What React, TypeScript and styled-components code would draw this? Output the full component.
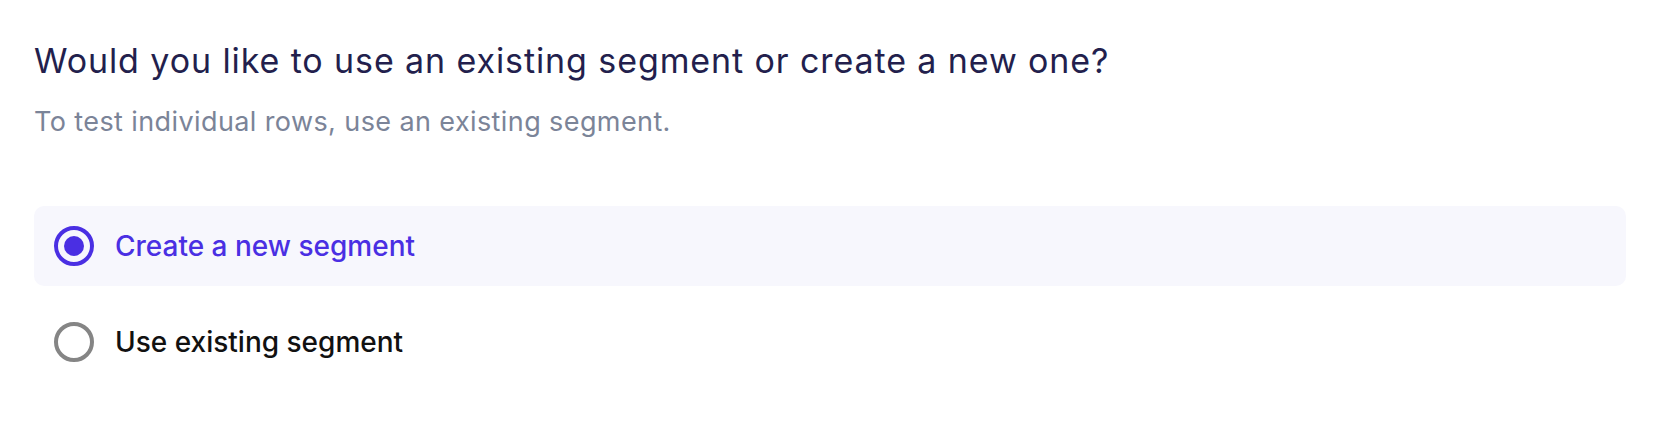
import React, { useState } from "react";
import styled, { createGlobalStyle } from "styled-components";

const GlobalStyle = createGlobalStyle`
    html, body {
        margin: 0;
        padding: 0;
        background: #ffffff;
        font-family: Inter, "Noto Sans", sans-serif;
    }
`;

const Container = styled.div`
    padding: 40px 34px 0 34px;
    display: flex;
    flex-direction: column;
`;

const Title = styled.h2`
    margin: 0;
    font-size: 34px;
    line-height: 42px;
    font-weight: 400;
    letter-spacing: 0.9px;
    color: #231f4d;
`;

const Subtitle = styled.p`
    margin: 22px 0 0 0;
    font-size: 27px;
    line-height: 36px;
    font-weight: 400;
    letter-spacing: 0.4px;
    color: #7b8498;
`;

const OptionList = styled.div`
    margin-top: 66px;
    display: flex;
    flex-direction: column;
    gap: 16px;
`;

const OptionRow = styled.label<{ $selected: boolean }>`
    display: flex;
    flex-direction: row;
    align-items: center;
    gap: 21px;
    height: 80px;
    padding: 0 20px;
    border-radius: 10px;
    cursor: pointer;
    background: ${p => (p.$selected ? "#f7f7fd" : "transparent")};
`;

const RadioCircle = styled.span<{ $selected: boolean }>`
    box-sizing: border-box;
    width: 40px;
    height: 40px;
    border-radius: 50%;
    border: 4px solid ${p => (p.$selected ? "#4a2fe3" : "#858585")};
    display: flex;
    align-items: center;
    justify-content: center;
    flex-shrink: 0;

    &::after {
        content: "";
        width: 20px;
        height: 20px;
        border-radius: 50%;
        background: #4a2fe3;
        display: ${p => (p.$selected ? "block" : "none")};
    }
`;

const OptionText = styled.span<{ $selected: boolean }>`
    font-size: 28px;
    line-height: 36px;
    font-weight: 500;
    color: ${p => (p.$selected ? "#4a2fe3" : "#111111")};
`;

const options = [
    { id: "new", label: "Create a new segment" },
    { id: "existing", label: "Use existing segment" },
];

export default function App() {
    const [selected, setSelected] = useState("new");

    return (
        <>
            <GlobalStyle />
            <Container>
                <Title>Would you like to use an existing segment or create a new one?</Title>
                <Subtitle>To test individual rows, use an existing segment.</Subtitle>
                <OptionList>
                    {options.map(option => {
                        const isSelected = option.id === selected;
                        return (
                            <OptionRow
                                key={option.id}
                                $selected={isSelected}
                                onClick={() => setSelected(option.id)}
                            >
                                <RadioCircle $selected={isSelected} />
                                <OptionText $selected={isSelected}>{option.label}</OptionText>
                            </OptionRow>
                        );
                    })}
                </OptionList>
            </Container>
        </>
    );
}
